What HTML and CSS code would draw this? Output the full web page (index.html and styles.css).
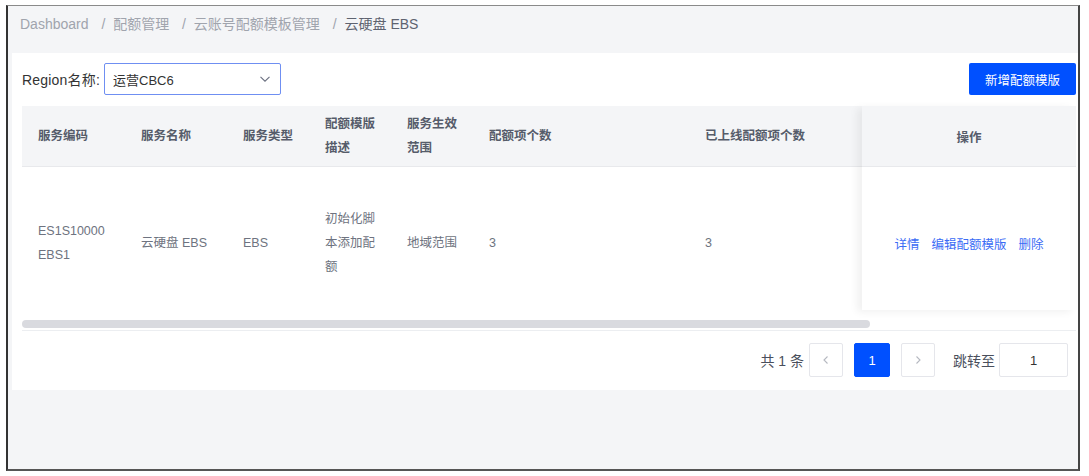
FILE: index.html
```html
<!DOCTYPE html>
<html lang="zh-CN">
  <head>
    <meta charset="UTF-8" />
    <meta name="viewport" content="width=device-width, initial-scale=1.0" />
    <title>云硬盘 EBS - 配额模版</title>
    <link rel="stylesheet" href="styles.css">
  </head>
  <body>
    <div class="screen">
      <!-- Breadcrumb -->
      <div class="breadcrumb">
        <span class="crumb">Dashboard</span>
        <span class="sep">/</span>
        <span class="crumb">配额管理</span>
        <span class="sep">/</span>
        <span class="crumb">云账号配额模板管理</span>
        <span class="sep">/</span>
        <span class="crumb current">云硬盘 EBS</span>
      </div>

      <div class="card">
        <!-- Toolbar -->
        <div class="toolbar">
          <div class="filter">
            <label class="filter-label">Region名称:</label>
            <div class="select">
              <span>运营CBC6</span>
              <svg class="chevron" width="12" height="12" viewBox="0 0 12 12">
                <polyline points="1.5,3.8 6,8.2 10.5,3.8" fill="none" stroke="#6b7080" stroke-width="1.1" />
              </svg>
            </div>
          </div>
          <button class="btn-primary">新增配额模版</button>
        </div>

        <!-- Table -->
        <div class="table">
          <div class="table-main">
            <div class="row head">
              <div class="cell">服务编码</div>
              <div class="cell">服务名称</div>
              <div class="cell">服务类型</div>
              <div class="cell">配额模版描述</div>
              <div class="cell">服务生效范围</div>
              <div class="cell">配额项个数</div>
              <div class="cell">已上线配额项个数</div>
            </div>
            <div class="row body">
              <div class="cell">ES1S10000<br>EBS1</div>
              <div class="cell">云硬盘 EBS</div>
              <div class="cell">EBS</div>
              <div class="cell">初始化脚本添加配额</div>
              <div class="cell">地域范围</div>
              <div class="cell">3</div>
              <div class="cell">3</div>
            </div>
          </div>
          <div class="table-fixed">
            <div class="fixed-head">操作</div>
            <div class="fixed-body">
              <a class="link">详情</a>
              <a class="link">编辑配额模版</a>
              <a class="link">删除</a>
            </div>
          </div>
        </div>

        <!-- Horizontal scrollbar -->
        <div class="scrollbar">
          <div class="thumb"></div>
        </div>

        <!-- Pagination -->
        <div class="pager">
          <span class="total">共 1 条</span>
          <span class="page-btn">
            <svg width="10" height="10" viewBox="0 0 10 10"><polyline points="6.5,1.5 3,5 6.5,8.5" fill="none" stroke="#b5b8c0" stroke-width="1.1" /></svg>
          </span>
          <span class="page-btn active">1</span>
          <span class="page-btn">
            <svg width="10" height="10" viewBox="0 0 10 10"><polyline points="3.5,1.5 7,5 3.5,8.5" fill="none" stroke="#b5b8c0" stroke-width="1.1" /></svg>
          </span>
          <span class="jump">跳转至</span>
          <div class="jump-input">1</div>
        </div>
      </div>
    </div>
  </body>
</html>
```

FILE: styles.css
```css
body {
  margin: 0;
  background: #fff;
  font-family: "Liberation Sans", "Noto Sans CJK SC", sans-serif;
}

.screen {
  margin: 5px 0 0 6px;
  width: 1074px;
  height: 466px;
  box-sizing: border-box;
  background: #f4f5f7;
  border-top: 1px solid #8a8a8a;
  border-left: 2px solid #333;
  border-right: 2px solid #444;
  border-bottom: 2px solid #555;
}

/* Breadcrumb */
.breadcrumb {
  height: 47px;
  box-sizing: border-box;
  padding: 7px 0 0 12px;
  font-size: 14px;
  line-height: 22px;
  color: #a0a4ad;
}

.breadcrumb .sep {
  margin: 0 4px 0 9px;
}

.breadcrumb .current {
  color: #5e6370;
}

/* Card */
.card {
  margin-left: 4px;
  width: 1066px;
  background: #fff;
  padding: 10px 2px 13px 10px;
  box-sizing: border-box;
}

.toolbar {
  display: flex;
  justify-content: space-between;
  align-items: center;
  height: 32px;
}

.filter {
  display: flex;
  align-items: center;
}

.filter-label {
  font-size: 14px;
  color: #333;
  margin-right: 4px;
  letter-spacing: 0.2px;
}

.select {
  width: 177px;
  height: 32px;
  box-sizing: border-box;
  border: 1px solid #6f8ff2;
  border-radius: 2px;
  display: flex;
  align-items: center;
  justify-content: space-between;
  padding: 0 9px 0 8px;
  font-size: 13px;
  color: #333;
}

.btn-primary {
  width: 107px;
  height: 32px;
  border: none;
  border-radius: 2px;
  background: #0050ff;
  color: #fff;
  font-family: inherit;
  font-size: 12.5px;
  cursor: pointer;
}

/* Table */
.table {
  display: flex;
  margin-top: 11px;
}

.table-main {
  flex: 1;
  overflow: hidden;
}

.row {
  display: grid;
  grid-template-columns: 103px 102px 82px 82px 82px 216px 1fr;
}

.cell {
  padding: 0 12px 0 16px;
  font-size: 12.5px;
  line-height: 24px;
}

.row.head {
  height: 61px;
  box-sizing: border-box;
  background: #f4f5f7;
  border-bottom: 1px solid #e8e9ec;
  align-items: center;
}

.row.head .cell {
  color: #565c6a;
  font-weight: 600;
}

.row.body {
  height: 143px;
  box-sizing: border-box;
  padding-top: 9px;
  align-items: center;
}

.row.body .cell {
  color: #6e7380;
}

.table-fixed {
  width: 214px;
  position: relative;
  box-shadow: -5px 2px 8px rgba(0, 0, 0, 0.06);
  background: #fff;
}

.fixed-head {
  height: 61px;
  box-sizing: border-box;
  background: #f4f5f7;
  border-bottom: 1px solid #e8e9ec;
  display: flex;
  align-items: center;
  justify-content: center;
  font-size: 12.5px;
  font-weight: 600;
  color: #565c6a;
}

.fixed-body {
  height: 143px;
  box-sizing: border-box;
  padding-top: 9px;
  display: flex;
  align-items: center;
  justify-content: center;
  gap: 12px;
  font-size: 12.5px;
}

.link {
  color: #3b6cf5;
  cursor: pointer;
}

/* Scrollbar */
.scrollbar {
  margin-top: 10px;
  height: 10px;
  border-bottom: 1px solid #eceef1;
}

.thumb {
  width: 848px;
  height: 8px;
  border-radius: 4px;
  background: #d9dadf;
}

/* Pagination */
.pager {
  display: flex;
  justify-content: flex-end;
  align-items: center;
  margin-top: 12px;
  margin-right: 8px;
  font-size: 14px;
  color: #4a4f5c;
}

.total {
  margin-right: 5px;
}

.page-btn {
  width: 34px;
  height: 34px;
  box-sizing: border-box;
  border: 1px solid #e5e6eb;
  border-radius: 2px;
  display: flex;
  align-items: center;
  justify-content: center;
  margin-right: 11px;
  font-size: 13px;
}

.page-btn.active {
  width: 36px;
  background: #0050ff;
  border-color: #0050ff;
  color: #fff;
}

.jump {
  margin: 0 4px 0 7px;
}

.jump-input {
  width: 69px;
  height: 34px;
  box-sizing: border-box;
  border: 1px solid #e5e6eb;
  border-radius: 2px;
  display: flex;
  align-items: center;
  justify-content: center;
  font-size: 13px;
  color: #333;
}
```
